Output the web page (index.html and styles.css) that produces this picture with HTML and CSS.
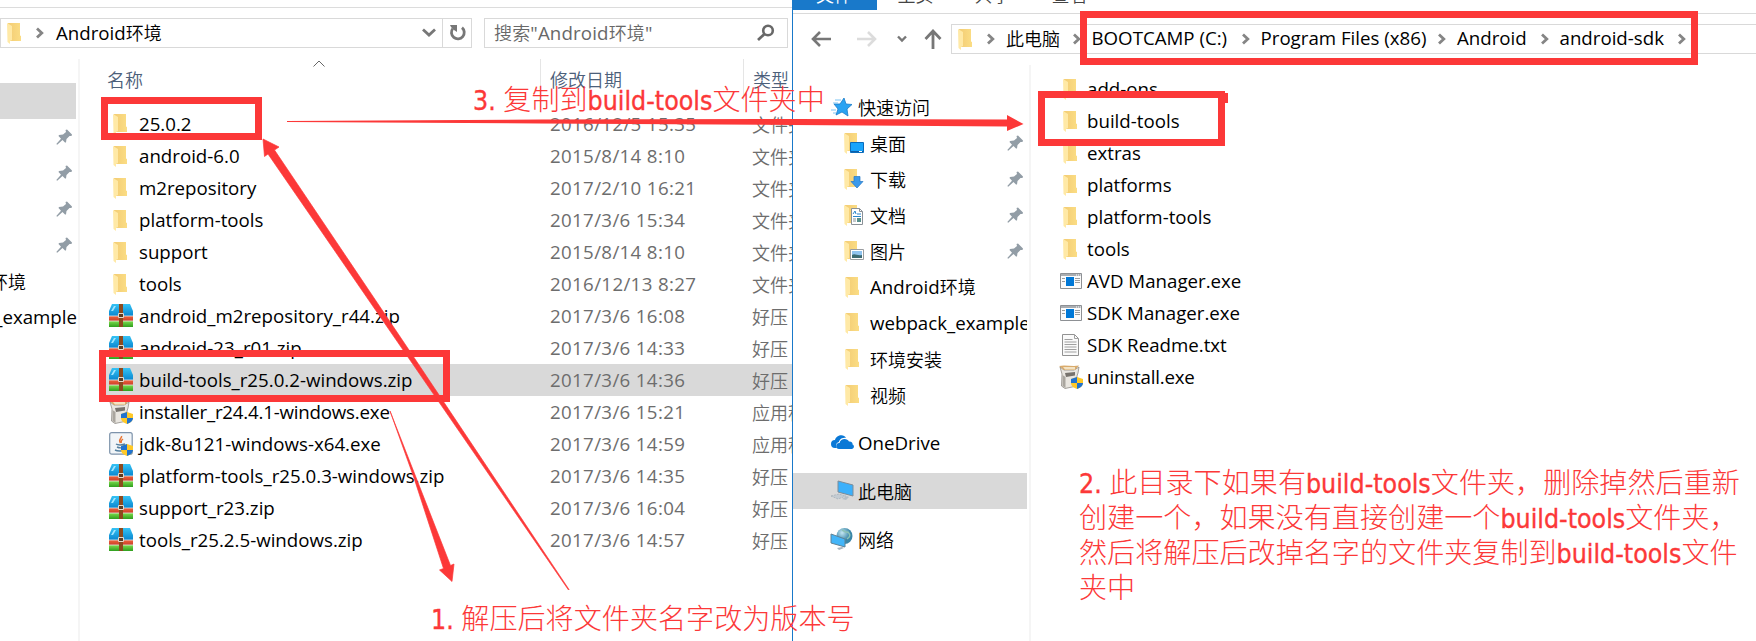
FILE: index.html
```
<!DOCTYPE html>
<html lang="zh-CN">
<head>
<meta charset="utf-8">
<title>Android SDK</title>
<link rel="stylesheet" href="styles.css">
</head>
<body>
<svg class="defs" aria-hidden="true">
  <defs>
    <linearGradient id="gf" x1="0" x2="1"><stop offset="0" stop-color="#f3cc74"/><stop offset="1" stop-color="#fbdd84"/></linearGradient>
    <linearGradient id="gb" x1="0" y1="0" x2="0" y2="1"><stop offset="0" stop-color="#35c3f5"/><stop offset="1" stop-color="#0a86cf"/></linearGradient>
    <linearGradient id="gr" x1="0" y1="0" x2="0" y2="1"><stop offset="0" stop-color="#f0623c"/><stop offset="1" stop-color="#c8402a"/></linearGradient>
    <linearGradient id="gg" x1="0" y1="0" x2="0" y2="1"><stop offset="0" stop-color="#7ede4e"/><stop offset="1" stop-color="#2f9e1e"/></linearGradient>
    <radialGradient id="gl" cx=".35" cy=".3"><stop offset="0" stop-color="#c4e6f2"/><stop offset="1" stop-color="#3a86a8"/></radialGradient>
    <symbol id="folder" viewBox="0 0 24 24"><path d="M5 2h12v12.500l1 .5v5H7z" fill="url(#gf)"/><path d="M4 2l5 3v14l-2 1v3l-2.500-2z" fill="#ffe9a6"/></symbol>
    <symbol id="zip" viewBox="0 0 24 24"><path d="M3 0h18l3 7v5H0V7z" fill="url(#gb)"/><path d="M5 2h2L4 7H2z" fill="#9fe6ff"/><path d="M0 12h24v5H0z" fill="url(#gr)"/><path d="M0 17h24v6H0z" fill="url(#gg)"/><path d="M0 12h24M0 17h24" stroke="#e8e8e8" stroke-width=".8"/><path d="M10 0h4v23h-4z" fill="#8d4a1e"/><path d="M9.500 9.500h5v4h-5z" fill="#5b3a22" stroke="#e5d9cc"/></symbol>
    <symbol id="shield" viewBox="0 0 12 12"><path d="M6 0l6 2v4c0 3-3 5-6 6C3 11 0 9 0 6V2z" fill="#ffc928"/><path d="M6 0L0 2v4h6zM6 6h6c0 3-3 5-6 6z" fill="#2173cf"/></symbol>
    <symbol id="setup" viewBox="0 0 24 24"><path d="M1 2l4 3h10l5-3-1 6-1 3v10l-12 2.500L2.500 21 3 9z" fill="#e9e6e0" stroke="#8f8c86" stroke-width=".8"/><path d="M0 1l5-.5 10 .5 5-.5-4 4.500H5z" fill="#d9ab6c"/><path d="M4 2h12v2.500H6z" fill="#f3e3c4"/><path d="M6 8l10-1v3.500L7 12z" fill="#77736d"/><path d="M3.500 10l3 2v11l-3-2z" fill="#aaa69f"/><use href="#shield" x="12" y="12" width="12" height="12"/></symbol>
    <symbol id="java" viewBox="0 0 24 24"><rect x=".7" y=".7" width="22.500" height="21.500" rx="2" fill="#f1f5f8" stroke="#7d93ab" stroke-width="1.200"/><path d="M12.500 4c1 2-4 3-1 7M14 7c-3 2-1 2-2 4" fill="none" stroke="#e97635" stroke-width="1.500"/><path d="M7 12c2 1.500 7 1 9 0M8 15c2 1 5 1 7 0M6 18c3 1.500 8 1 10 0" fill="none" stroke="#55809f" stroke-width="1.400"/><use href="#shield" x="12" y="12" width="12" height="12"/></symbol>
    <symbol id="exe" viewBox="0 0 24 24"><path d="M1.500 4.500h21v15h-21z" fill="#fbfbfb" stroke="#8d9094"/><path d="M2 5h20v2H2z" fill="#a9adb1"/><path d="M17 6h1m1 0h1m1 0h1" stroke="#fff"/><path d="M7 8h8v9H7z" fill="#0078d7"/><path d="M3 9.500h3M3 12.500h3M16 9.500h5M16 11.500h5M16 13.500h5" stroke="#9a9da0"/></symbol>
    <symbol id="txt" viewBox="0 0 24 24"><path d="M3.500 1.500h12l4 4v17h-16z" fill="#fafafa" stroke="#929292"/><path d="M15.500 1.500v4h4M5.500 6.500h8M5.500 9h12M5.500 11.500h12M5.500 14h12M5.500 16.500h12M5.500 19h12" fill="none" stroke="#a0a0a0"/></symbol>
    <symbol id="desk" viewBox="0 0 24 24"><use href="#folder" x="-1" width="24" height="24"/><path d="M9.500 11.500h13v10h-13z" fill="#18a4fb" stroke="#0a6cbc"/><path d="M10 20h12v1H10z" fill="#0d5ea8"/><path d="M18 20.500h3" stroke="#fff"/></symbol>
    <symbol id="down" viewBox="0 0 24 24"><use href="#folder" x="-1" width="24" height="24"/><path d="M13 9.500h6v5h3L16 21l-6-6.500h3z" fill="#3b99ea" stroke="#2477c4" stroke-width=".7"/></symbol>
    <symbol id="doc" viewBox="0 0 24 24"><use href="#folder" x="-1" width="24" height="24"/><path d="M10.500 5.500h8l3 3v13h-11z" fill="#fff" stroke="#8a9197"/><path d="M18.500 5.500v3h3" fill="none" stroke="#8a9197"/><path d="M12 11l2-3 1 3M12 13.500h8M16 11h4" fill="none" stroke="#2c86ca"/><path d="M12 16h3M12 18h3" stroke="#8a9197"/><path d="M16 15h4v4h-4z" fill="#58908d"/></symbol>
    <symbol id="pic" viewBox="0 0 24 24"><use href="#folder" x="-1" width="24" height="24"/><path d="M9.500 10.500h13v10h-13z" fill="#fff" stroke="#9a9da0"/><path d="M11 12h10v7H11z" fill="#8fc3ef"/><path d="M11 16c3-2 5 1 10 0v3H11z" fill="#3b6a72"/></symbol>
    <symbol id="star" viewBox="0 0 24 24"><path d="M14 3l2 6 6 .5-5 4.500 1 7-6-4-6 3 2-6-4-5h6z" fill="#2ba3f2" stroke="#1a7cc9" stroke-width=".8"/><path d="M5 5h6M3 8h5M1 15h5M3 18h3" stroke="#7cc4f3"/></symbol>
    <symbol id="drive" viewBox="0 0 24 24"><path d="M5 17a4 4 0 0 1 0-8c1-5 9-6.500 11-2-5-1-7 3-7 4-4 1-3 5-2 6z" fill="#0a78d6"/><path d="M9 18a3 3 0 0 1 .5-6c1-5 8-5 9.500-1.500 2-.5 4 1 3.500 3 2 .5 2 4-.5 4.500z" fill="#0a78d6"/></symbol>
    <symbol id="pc" viewBox="0 0 24 24"><path d="M8 2l15 4v11L8 13z" fill="#3bb0fb" stroke="#7c8d9a"/><path d="M1 17l8-2 7 2-8 3z" fill="#c4ccd3" stroke="#9aa6b0" stroke-width=".6" stroke-dasharray="2 1"/><path d="M12 20l5-3 2 1-3 3z" fill="#b5bec6"/></symbol>
    <symbol id="net" viewBox="0 0 24 24"><circle cx="14.500" cy="9" r="8" fill="url(#gl)"/><path d="M12 3c3 1 3 3 6 2 3 3 2 5-1 7" fill="none" stroke="#8cc2b5" stroke-width="1.500"/><path d="M1 7l14 5v8L1 16z" fill="#43b5f8" stroke="#5f8296"/><path d="M7 21l5-1 2 1-5 2z" fill="#aab4bc"/></symbol>
    <symbol id="pin" viewBox="0 0 16 16"><path d="M9.500 1L11 .5 16 5.500l-.500 1.500h-2L10.500 10l-.5 3.500h-1L6.500 11 1.200 15.800.300 15 5 9.800 2.500 7l.5-1 4-.5L10 3z" fill="#929da6"/></symbol>
    <symbol id="chev" viewBox="0 0 10 12"><path d="M2 1.500L6.800 6 2 10.500" fill="none" stroke="#858585" stroke-width="2.800"/></symbol>
  </defs>
</svg>

<section class="win left">
  <header class="bar bar-left">
    <div class="address">
      <svg class="fold"><use href="#folder"/></svg>
      <svg class="chev"><use href="#chev"/></svg>
      <span class="path">Android<span class="zh">环境</span></span>
      <svg class="caret" viewBox="0 0 14 10"><path d="M1 1.500l6 5.500 6-5.500" fill="none" stroke="#777" stroke-width="2.800"/></svg>
      <span class="refresh"><svg viewBox="0 0 18 18"><path d="M3.800 4.500A6.400 6.400 0 1 0 13 3.600" fill="none" stroke="#777" stroke-width="2.800"/><path d="M1 1h7v7L5 6 2 3z" fill="#777"/></svg></span>
    </div>
    <div class="search"><span><span class="zh">搜索</span>"Android<span class="zh">环境</span>"</span>
      <svg viewBox="0 0 18 18"><circle cx="11" cy="6.500" r="4.800" fill="none" stroke="#686868" stroke-width="2.600"/><path d="M7.500 10L1 16" stroke="#686868" stroke-width="2.800"/></svg>
    </div>
  </header>
  <div class="content">
    <nav class="tree tree-left">
      <div class="sel"></div>
      <div class="pinrow"><svg class="pin"><use href="#pin"/></svg></div>
      <div class="pinrow"><svg class="pin"><use href="#pin"/></svg></div>
      <div class="pinrow"><svg class="pin"><use href="#pin"/></svg></div>
      <div class="pinrow"><svg class="pin"><use href="#pin"/></svg></div>
      <div class="cut cut-a"><span>Android<span class="zh">环境</span></span></div>
      <div class="cut cut-b"><span>webpack_example</span></div>
    </nav>
    <div class="list">
      <svg class="sort" viewBox="0 0 12 7"><path d="M.5 6.500L6 1l5.500 5.500" fill="none" stroke="#666"/></svg>
      <div class="head zh"><span class="c1">名称</span><span class="c2">修改日期</span><span class="c3">类型</span></div>
      <div class="row"><svg><use href="#folder"/></svg><span class="c1">25.0.2</span><span class="c2">2016/12/5 15:35</span><span class="c3 zh">文件夹</span></div>
      <div class="row"><svg><use href="#folder"/></svg><span class="c1">android-6.0</span><span class="c2">2015/8/14 8:10</span><span class="c3 zh">文件夹</span></div>
      <div class="row"><svg><use href="#folder"/></svg><span class="c1">m2repository</span><span class="c2">2017/2/10 16:21</span><span class="c3 zh">文件夹</span></div>
      <div class="row"><svg><use href="#folder"/></svg><span class="c1">platform-tools</span><span class="c2">2017/3/6 15:34</span><span class="c3 zh">文件夹</span></div>
      <div class="row"><svg><use href="#folder"/></svg><span class="c1">support</span><span class="c2">2015/8/14 8:10</span><span class="c3 zh">文件夹</span></div>
      <div class="row"><svg><use href="#folder"/></svg><span class="c1">tools</span><span class="c2">2016/12/13 8:27</span><span class="c3 zh">文件夹</span></div>
      <div class="row"><svg><use href="#zip"/></svg><span class="c1">android_m2repository_r44.zip</span><span class="c2">2017/3/6 16:08</span><span class="c3 zh">好压</span></div>
      <div class="row"><svg><use href="#zip"/></svg><span class="c1">android-23_r01.zip</span><span class="c2">2017/3/6 14:33</span><span class="c3 zh">好压</span></div>
      <div class="row picked"><svg><use href="#zip"/></svg><span class="c1">build-tools_r25.0.2-windows.zip</span><span class="c2">2017/3/6 14:36</span><span class="c3 zh">好压</span></div>
      <div class="row"><svg><use href="#setup"/></svg><span class="c1 snug">installer_r24.4.1-windows.exe</span><span class="c2">2017/3/6 15:21</span><span class="c3 zh">应用程序</span></div>
      <div class="row"><svg><use href="#java"/></svg><span class="c1">jdk-8u121-windows-x64.exe</span><span class="c2">2017/3/6 14:59</span><span class="c3 zh">应用程序</span></div>
      <div class="row"><svg><use href="#zip"/></svg><span class="c1">platform-tools_r25.0.3-windows.zip</span><span class="c2">2017/3/6 14:35</span><span class="c3 zh">好压</span></div>
      <div class="row"><svg><use href="#zip"/></svg><span class="c1">support_r23.zip</span><span class="c2">2017/3/6 16:04</span><span class="c3 zh">好压</span></div>
      <div class="row"><svg><use href="#zip"/></svg><span class="c1">tools_r25.2.5-windows.zip</span><span class="c2">2017/3/6 14:57</span><span class="c3 zh">好压</span></div>
    </div>
  </div>
</section>

<section class="win right">
  <div class="ribbon zh"><span class="tab on">文件</span><span class="tab">主页</span><span class="tab">共享</span><span class="tab">查看</span></div>
  <header class="bar bar-right">
    <div class="arrows">
      <svg width="20" height="18" viewBox="0 0 20 18"><path d="M20 9H2M9 2L2 9l7 7" fill="none" stroke="#777" stroke-width="2.600"/></svg>
      <svg width="20" height="18" viewBox="0 0 20 18"><path d="M0 9h18M11 2l7 7-7 7" fill="none" stroke="#dcdcdc" stroke-width="2.600"/></svg>
      <svg width="10" height="8" viewBox="0 0 10 8"><path d="M1 1.500l4 4 4-4" fill="none" stroke="#777" stroke-width="2.400"/></svg>
      <svg width="18" height="20" viewBox="0 0 18 20"><path d="M9 20V2M1.500 10L9 2l7.500 8" fill="none" stroke="#777" stroke-width="2.800"/></svg>
    </div>
    <div class="crumbs">
      <svg class="fold"><use href="#folder"/></svg>
      <svg class="chev k1"><use href="#chev"/></svg><span class="zh w1">此电脑</span>
      <svg class="chev"><use href="#chev"/></svg><span class="w2">BOOTCAMP (C:)</span>
      <svg class="chev"><use href="#chev"/></svg><span class="w3">Program Files (x86)</span>
      <svg class="chev"><use href="#chev"/></svg><span class="w4">Android</span>
      <svg class="chev"><use href="#chev"/></svg><span class="w5">android-sdk</span>
      <svg class="chev"><use href="#chev"/></svg>
    </div>
  </header>
  <div class="content">
    <nav class="tree tree-right">
      <div class="node"><svg><use href="#star"/></svg><span class="zh">快速访问</span></div>
      <div class="node sub"><svg><use href="#desk"/></svg><span class="zh">桌面</span><svg class="pin"><use href="#pin"/></svg></div>
      <div class="node sub"><svg><use href="#down"/></svg><span class="zh">下载</span><svg class="pin"><use href="#pin"/></svg></div>
      <div class="node sub"><svg><use href="#doc"/></svg><span class="zh">文档</span><svg class="pin"><use href="#pin"/></svg></div>
      <div class="node sub"><svg><use href="#pic"/></svg><span class="zh">图片</span><svg class="pin"><use href="#pin"/></svg></div>
      <div class="node sub"><svg><use href="#folder"/></svg><span>Android<span class="zh">环境</span></span></div>
      <div class="node sub"><svg><use href="#folder"/></svg><span>webpack_example</span></div>
      <div class="node sub"><svg><use href="#folder"/></svg><span class="zh">环境安装</span></div>
      <div class="node sub"><svg><use href="#folder"/></svg><span class="zh">视频</span></div>
      <div class="node gap"><svg><use href="#drive"/></svg><span>OneDrive</span></div>
      <div class="node gap here"><svg><use href="#pc"/></svg><span class="zh">此电脑</span></div>
      <div class="node gap"><svg><use href="#net"/></svg><span class="zh">网络</span></div>
    </nav>
    <div class="files">
      <div class="row"><svg><use href="#folder"/></svg><span>add-ons</span></div>
      <div class="row"><svg><use href="#folder"/></svg><span>build-tools</span></div>
      <div class="row"><svg><use href="#folder"/></svg><span>extras</span></div>
      <div class="row"><svg><use href="#folder"/></svg><span>platforms</span></div>
      <div class="row"><svg><use href="#folder"/></svg><span>platform-tools</span></div>
      <div class="row"><svg><use href="#folder"/></svg><span>tools</span></div>
      <div class="row"><svg><use href="#exe"/></svg><span>AVD Manager.exe</span></div>
      <div class="row"><svg><use href="#exe"/></svg><span>SDK Manager.exe</span></div>
      <div class="row"><svg><use href="#txt"/></svg><span>SDK Readme.txt</span></div>
      <div class="row"><svg><use href="#setup"/></svg><span class="snug">uninstall.exe</span></div>
    </div>
  </div>
</section>

<svg class="marks" viewBox="0 0 1756 641">
  <g fill="none" stroke="#fc3838" stroke-width="7">
    <path d="M104.500 100.500h154v36h-154z"/>
    <path d="M102.500 353.500h344v45h-344z"/>
    <path d="M1083.500 14.500h611v47h-611z"/>
    <path d="M1041.500 94.500h180v38.500V142.500h-180z"/>
  </g>
  <g fill="#fc3838">
    <path d="M1218 93h10v10h-10z"/>
    <path d="M287 121L540 119.500 792 119l215 .5V115l16.500 9-16.500 7v-4.500L792 125 540 123.500 287 122z"/>
    <path d="M568.500 590L268 154l-3.500 2.500L263 139l16 8-4.500 3L409 350 569 589.500z" stroke="#fc3838" stroke-width=".7"/>
    <path d="M390 411L450.500 565.500l3.500-1.500-2 17.500L439.500 570l4-1.500L414 478z" stroke="#fc3838" stroke-width=".7"/>
  </g>
</svg>
<p class="note n1"><span class="la">1. </span>解压后将文件夹名字改为版本号</p>
<p class="note n2"><span class="la">2. </span>此目录下如果有<span class="la">build-tools</span>文件夹，删除掉然后重新<br>创建一个，如果没有直接创建一个<span class="la">build-tools</span>文件夹，<br>然后将解压后改掉名字的文件夹复制到<span class="la">build-tools</span>文件<br>夹中</p>
<p class="note n3"><span class="la">3. </span>复制到<span class="la">build-tools</span>文件夹中</p>
</body>
</html>
```
FILE: styles.css
```
* { box-sizing: border-box; }
body {
  position: relative;
  display: flex;
  width: 1756px;
  height: 641px;
  margin: 0;
  overflow: hidden;
  background: #fff;
  color: #000;
  font: 18.700px/32px "Open Sans", "Noto Sans CJK SC", sans-serif;
  white-space: nowrap;
}
svg { display: block; flex: none; }
.defs { position: absolute; width: 0; height: 0; }
.zh { font-family: "Noto Sans CJK SC", sans-serif; font-size: 18px; font-weight: 350; }
.win { display: flex; flex-direction: column; overflow: hidden; }
.left { width: 792px; padding-top: 7px; }
.right { flex: 1; border-left: 1px solid #1979ca; }
.content { display: flex; flex: 1; min-height: 0; }

.bar { display: flex; flex: none; }
.bar-left { height: 52px; padding-top: 10px; border-top: 1px solid #dcdcdc; }
.address, .search { display: flex; align-items: center; height: 30px; border: 1px solid #d9d9d9; }
.address { width: 472px; padding-left: 2px; }
.fold { width: 24px; height: 24px; }
.chev { width: 10px; height: 12px; }
.address .chev { margin-left: 8px; }
.address .path { flex: 1; margin: -2px 0 0 11px; }
.caret { width: 14px; height: 10px; margin-right: 6px; }
.refresh { display: flex; align-items: center; width: 29px; height: 28px; padding-left: 6px; border-left: 1px solid #d9d9d9; }
.refresh svg { width: 18px; height: 18px; }
.search { justify-content: space-between; width: 304px; margin-left: 12px; padding: 0 12px 0 9px; color: #686868; }
.search > span { margin-top: -1px; letter-spacing: .15px; }
.search svg { width: 18px; height: 18px; }

.tree { flex: none; }
.tree-left { width: 80px; border-right: 2px solid #f5f5f5; padding-top: 24px; }
.sel { width: 76px; height: 36px; background: #d9d9d9; }
.pinrow { display: flex; height: 36px; padding: 10px 0 0 56px; }
.pin { width: 16px; height: 16px; }
.cut { display: flex; justify-content: flex-end; height: 36px; overflow: hidden; line-height: 36px; }
.cut-a { width: 26px; }
.cut-b { width: 77px; }

.list { flex: 1; }
.sort { width: 12px; height: 7px; margin: 1px 0 0 233px; }
.head { display: flex; height: 41px; margin-top: -8px; padding-left: 27px; color: #4c607a; line-height: 41px; }
.head .c1 { width: 434px; border-right: 1px solid #e5e5e5; }
.head .c2 { width: 203px; padding-left: 9px; border-right: 1px solid #e5e5e5; }
.head .c3 { padding-left: 9px; }
.list .row { display: flex; align-items: center; height: 32px; padding-left: 29px; }
.head + .row { margin-top: 8px; }
.row svg { width: 24px; height: 24px; }
.row .c1 { width: 411px; padding-left: 6px; }
.row .c2 { width: 208px; padding-left: 6px; color: #6d6d6d; letter-spacing: .35px; }
.row .c3 { color: #6d6d6d; }
.row .snug { letter-spacing: -.2px; }
.picked { background: linear-gradient(#d9d9d9, #d9d9d9) 25px 0 no-repeat; }

.ribbon { display: flex; height: 14px; border-bottom: 1px solid #dadada; overflow: hidden; color: #444; line-height: 18px; }
.tab { width: 77px; height: 10px; text-align: center; margin-top: -15px; }
.tab.on { width: 84px; height: 25px; padding-right: 2px; background: #1979ca; color: #fff; }
.bar-right { height: 51px; padding-top: 10px; }
.arrows { display: flex; align-items: center; height: 30px; padding-left: 18px; }
.arrows svg + svg { margin-left: 26px; }
.arrows svg + svg + svg { margin-left: 20px; }
.arrows svg + svg + svg + svg { margin-left: 17px; }
.crumbs { display: flex; flex: 1; align-items: center; height: 30px; margin-left: 9px; border: 1px solid #d9d9d9; border-right: 0; padding-left: 2px; }
.crumbs span { margin: -2px 0 0 10px; }
.crumbs .k1 { margin-left: 8px; }
.w1 { width: 65.500px; }
.w2 { width: 149px; }
.w3 { width: 176.500px; }
.w4 { width: 82.500px; }
.w5 { width: 117px; }

.tree-right { width: 238px; padding-top: 24px; border-right: 2px solid #f5f5f5; }
.node { display: flex; align-items: center; width: 234px; height: 36px; padding-left: 37px; overflow: hidden; }
.node > svg { width: 24px; height: 24px; }
.node > span { margin: -1px 0 0 4px; }
.node.sub { padding-left: 48px; }
.node.sub > span { margin-left: 5px; }
.node > .pin { width: 16px; height: 16px; margin-left: auto; margin-right: 4px; }
.gap { margin-top: 12px; }
.here { background: #d9d9d9; }

.files { padding: 8px 0 0 28px; }
.files .row { display: flex; align-items: center; height: 32px; }
.files .row span { margin-left: 4px; }

.marks { position: absolute; left: 0; top: 0; width: 1756px; height: 641px; }
.note { position: absolute; margin: 0; color: #fc3838; font: 300 28.100px/35px "Noto Sans CJK SC", sans-serif; }
.la { font-family: "DejaVu Sans Condensed", "DejaVu Sans", sans-serif; font-stretch: condensed; font-size: 26.500px; font-weight: 400; line-height: 0; -webkit-text-stroke: .35px #fc3838; }
.n1 { left: 431px; top: 599px; }
.n2 { left: 1079px; top: 463px; }
.n3 { left: 473px; top: 80px; }
```
